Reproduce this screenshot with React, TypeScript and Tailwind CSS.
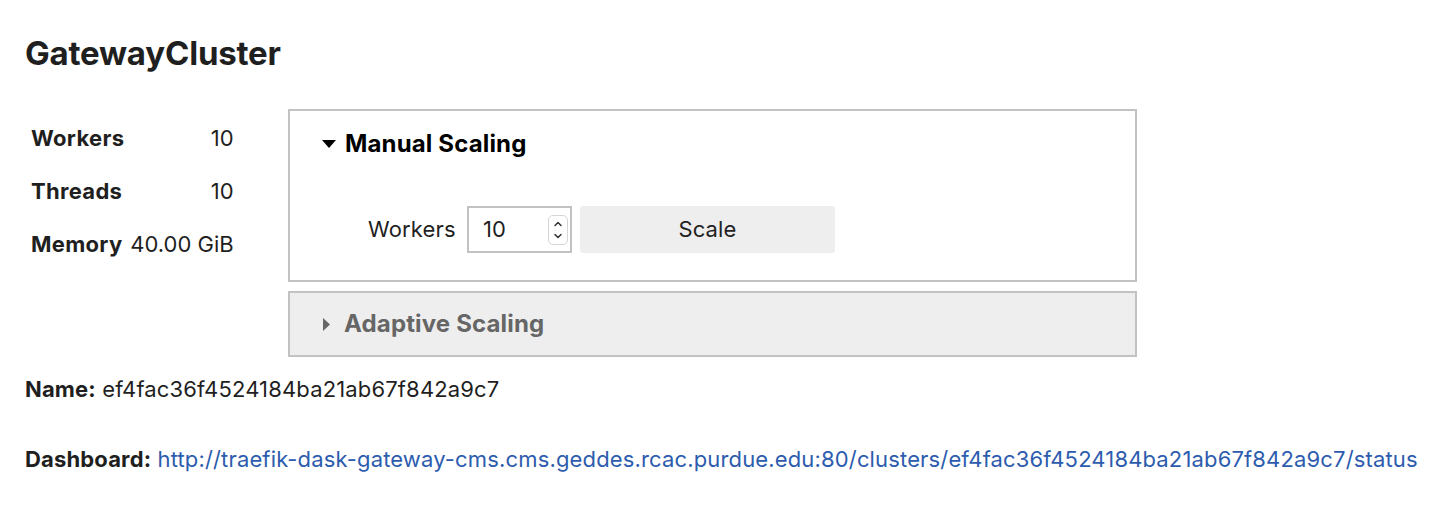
import { ChevronUp, ChevronDown } from 'lucide-react';

const stats = [
  { label: 'Workers', value: '10' },
  { label: 'Threads', value: '10' },
  { label: 'Memory', value: '40.00 GiB' },
];

const url = 'http://traefik-dask-gateway-cms.cms.geddes.rcac.purdue.edu:80/clusters/ef4fac36f4524184ba21ab67f842a9c7/status';

export default function App() {
  return (
    <div className="min-h-[510px] bg-white pl-[25px] pt-[34px] text-[#1f1f1f] tracking-[0.15px] [font-family:Inter,'Noto_Sans',sans-serif]">
      <h1 className="text-[33px] font-bold leading-[38px] tracking-[-0.2px]">GatewayCluster</h1>

      <div className="mt-[37px] flex items-start">
        <div className="grid w-[263px] grid-cols-[auto_auto] content-start justify-start gap-x-[6px] gap-y-[27px] pl-[6px] pt-[16px] text-[22px] leading-[26px]">
          {stats.map(({ label, value }) => (
            <div key={label} className="contents">
              <span className="font-bold tracking-[0.3px]">{label}</span>
              <span className="text-right tracking-[0px]">{value}</span>
            </div>
          ))}
        </div>

        <div className="flex w-[849px] flex-col gap-[9px]">
          <div className="h-[173px] border-2 border-[#c2c2c2] bg-white pl-[32px] pt-[18px]">
            <div className="flex items-center gap-[9px] text-[24px] font-bold leading-[30px] text-black">
              <svg width="14" height="9" viewBox="0 0 14 9" aria-hidden="true">
                <polygon points="0,0 14,0 7,8" fill="#000" />
              </svg>
              Manual Scaling
            </div>
            <div className="mt-[47px] flex items-center pl-[46px] text-[22px]">
              <span className="w-[99px]">Workers</span>
              <div className="flex h-[47px] w-[105px] items-center justify-between border-2 border-[#c2c2c2] pl-[14px] pr-[2px]">
                <span>10</span>
                <div className="flex h-[30px] w-[20px] flex-col items-center justify-center rounded-[5px] border border-[#d6d6d6] text-[#333]">
                  <ChevronUp size={12} strokeWidth={3} />
                  <ChevronDown size={12} strokeWidth={3} />
                </div>
              </div>
              <button className="ml-[8px] h-[47px] w-[255px] rounded-[3px] bg-[#eeeeee] text-[22px] text-[#222]">Scale</button>
            </div>
          </div>

          <div className="flex h-[66px] items-center gap-[13px] border-2 border-[#c2c2c2] bg-[#eeeeee] pl-[33px] text-[24px] font-bold text-[#666666]">
            <svg width="8" height="13" viewBox="0 0 8 13" aria-hidden="true">
              <polygon points="0,0 7,6.5 0,13" fill="#666" />
            </svg>
            Adaptive Scaling
          </div>
        </div>
      </div>

      <p className="mt-[18px] text-[22px] leading-[28px]">
        <span className="font-bold">Name:</span> ef4fac36f4524184ba21ab67f842a9c7
      </p>
      <p className="mt-[42px] text-[22px] leading-[28px]">
        <span className="font-bold">Dashboard:</span>{' '}
        <a href={url} className="text-[#2d5cae]">{url}</a>
      </p>
    </div>
  );
}
